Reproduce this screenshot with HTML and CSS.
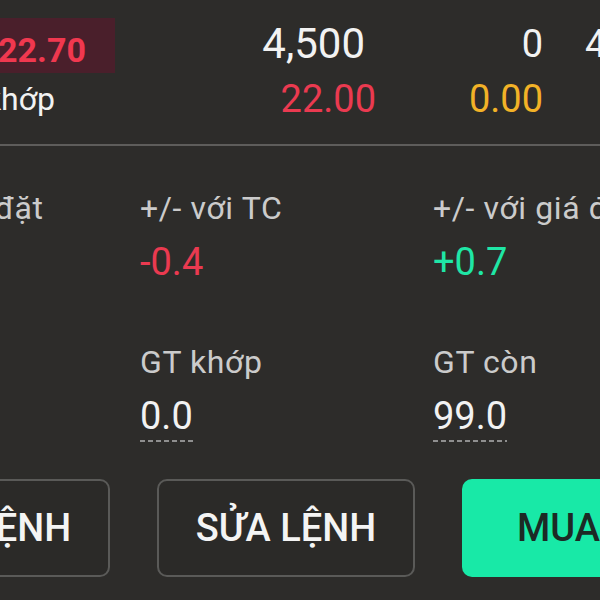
FILE: index.html
```html
<html>
<head>
    <meta charset="UTF-8">
    <title>Chi tiết lệnh</title>
    <link rel="stylesheet" href="styles.css">
</head>
<body>
    <div class="screen">
        <!-- Quote summary -->
        <div class="quote">
            <div class="quote-row top">
                <div class="cell first"><span class="price-tag">22.70</span></div>
                <div class="cell vol">4,500</div>
                <div class="cell num">0</div>
                <div class="cell next">4,500</div>
            </div>
            <div class="quote-row bottom">
                <div class="cell first label">Giá khớp</div>
                <div class="cell vol down">22.00</div>
                <div class="cell num ref">0.00</div>
            </div>
        </div>

        <div class="divider"></div>

        <!-- Order details -->
        <div class="details">
            <div class="item">
                <div class="item-label">Khối lượng đặt</div>
                <div class="item-value">&nbsp;</div>
            </div>
            <div class="item">
                <div class="item-label">+/- với TC</div>
                <div class="item-value down">-0.4</div>
            </div>
            <div class="item">
                <div class="item-label">+/- với giá đặt</div>
                <div class="item-value up">+0.7</div>
            </div>

            <div class="item">
                <div class="item-label">&nbsp;</div>
                <div class="item-value">&nbsp;</div>
            </div>
            <div class="item">
                <div class="item-label">GT khớp</div>
                <div class="item-value"><span class="dotted">0.0</span></div>
            </div>
            <div class="item">
                <div class="item-label">GT còn</div>
                <div class="item-value"><span class="dotted">99.0</span></div>
            </div>
        </div>

        <!-- Actions -->
        <div class="actions">
            <button class="btn outline" type="button">HỦY LỆNH</button>
            <button class="btn outline" type="button">SỬA LỆNH</button>
            <button class="btn buy" type="button">MUA</button>
        </div>
    </div>
</body>
</html>
```

FILE: styles.css
```css
html, body {
    margin: 0;
    padding: 0;
    overflow: hidden;
}

body {
    font-family: 'Roboto', 'Noto Sans', sans-serif;
    background-color: #2d2c2a;
    color: #f2f2f2;
    width: 600px;
    height: 600px;
}

.screen {
    margin-left: -153px;
    width: 1000px;
    padding-top: 18px;
}

.quote-row {
    display: flex;
    align-items: flex-start;
}

.cell {
    white-space: nowrap;
}

.cell.first {
    width: 268px;
}

.cell.vol {
    width: 261px;
    text-align: right;
}

.cell.num {
    width: 167px;
    text-align: right;
}

.cell.next {
    padding-left: 42px;
}

.top .cell {
    height: 55px;
    font-size: 38px;
    line-height: 52px;
}

.top .cell.vol {
    font-size: 42px;
    padding-right: 11px;
    box-sizing: border-box;
}

.price-tag {
    display: block;
    height: 55px;
    box-sizing: border-box;
    padding: 12px 29px 0 0;
    background-color: #4a1f2b;
    color: #f0384f;
    font-size: 34px;
    font-weight: 700;
    line-height: 40px;
    text-align: right;
}

.bottom .cell {
    height: 52px;
    font-size: 38px;
    line-height: 52px;
}

.bottom .cell.label {
    font-size: 32px;
    text-align: right;
    padding-right: 60px;
    box-sizing: border-box;
}

.down {
    color: #ea3a50;
}

.up {
    color: #1fe6a6;
}

.ref {
    color: #f2b227;
}

.divider {
    height: 2px;
    margin-top: 19px;
    background-color: #5e5d5b;
}

.details {
    display: grid;
    grid-template-columns: 313px 293px 293px;
    row-gap: 56px;
    margin-left: -20px;
    padding-top: 42px;
}

.item-label {
    font-size: 32px;
    letter-spacing: 0.6px;
    line-height: 40px;
    color: #cbcbcb;
    white-space: nowrap;
}

.item-value {
    margin-top: 10px;
    font-size: 38px;
    line-height: 48px;
    white-space: nowrap;
}

.dotted {
    display: inline-block;
    padding-bottom: 2px;
    background: repeating-linear-gradient(90deg, #8f8f8f 0 5px, transparent 5px 8px) left bottom / 100% 2px no-repeat;
}

.actions {
    display: flex;
    gap: 47px;
    margin-top: 37px;
    padding-left: 5px;
}

.btn {
    width: 258px;
    height: 98px;
    border-radius: 10px;
    font-family: 'Roboto', 'Noto Sans', sans-serif;
    font-size: 38px;
    font-weight: 500;
    padding: 0;
    cursor: pointer;
}

.btn.outline {
    background-color: #2b2a28;
    border: 2px solid #5a5a58;
    color: #f4f4f4;
}

.btn.buy {
    width: 193px;
    background-color: #18e9a7;
    border: none;
    color: #1c2a25;
}
```
